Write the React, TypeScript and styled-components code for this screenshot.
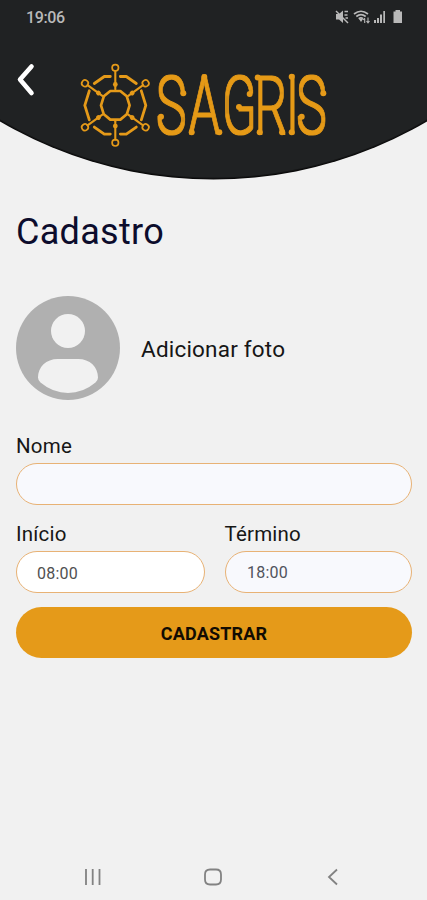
import React from 'react';
import styled, { createGlobalStyle } from 'styled-components';

const GlobalStyle = createGlobalStyle`
  * { box-sizing: border-box; }
  body { margin: 0; background: #f1f1f1; font-family: Roboto, "Liberation Sans", sans-serif; }
`;

const Screen = styled.div`
  width: 427px;
  height: 900px;
  display: flex;
  flex-direction: column;
  background: #f1f1f1;
  overflow: hidden;
`;

const Header = styled.header`
  flex: none;
  height: 180px;
  background: radial-gradient(circle at 50% -243px, #202223 420px, #080808 422px);
  clip-path: circle(422.5px at 50% -243px);
`;

const StatusBar = styled.div`
  height: 34px;
  padding: 0 22px 0 26px;
  display: flex;
  align-items: center;
  justify-content: space-between;
  color: #b9b9b9;
`;

const Clock = styled.span`
  font-size: 16px;
  font-weight: 500;
  line-height: 34px;
  padding-top: 1px;
  letter-spacing: -0.4px;
`;

const Brand = styled.div`
  display: flex;
  align-items: flex-start;
  padding: 26px 0 0 14px;
`;

const BackButton = styled.button`
  width: 24px;
  height: 40px;
  padding: 0;
  border: 0;
  background: none;
  display: block;
`;

const LogoSvg = styled.svg`
  display: block;
  margin-left: 37px;
  overflow: visible;
`;

const Content = styled.main`
  flex: 1;
  padding: 29px 15px 0 16px;
  display: flex;
  flex-direction: column;
`;

const Title = styled.h1`
  margin: 0;
  height: 46px;
  line-height: 46px;
  font-size: 36px;
  font-weight: 400;
  letter-spacing: 0.3px;
  color: #0c0c2c;
`;

const PhotoRow = styled.div`
  display: flex;
  align-items: center;
  gap: 21px;
  margin-top: 41px;
  height: 104px;
`;

const PhotoLabel = styled.span`
  font-size: 22.5px;
  line-height: 28px;
  letter-spacing: 0.2px;
  color: #161616;
  padding-top: 2px;
`;

const Fields = styled.div`
  display: grid;
  grid-template-columns: 188.5px 187.5px;
  column-gap: 20px;
  row-gap: 16px;
  margin-top: 33px;
`;

const Field = styled.label<{ $wide?: boolean }>`
  display: flex;
  flex-direction: column;
  grid-column: ${(p) => (p.$wide ? '1 / -1' : 'auto')};
`;

const FieldLabel = styled.span`
  height: 30px;
  line-height: 26px;
  font-size: 20.5px;
  letter-spacing: 0.2px;
  color: #161616;
`;

const Input = styled.input<{ $white?: boolean }>`
  width: 100%;
  height: 42px;
  padding: ${(p) => (p.$white ? '2px 20px 0' : '0 21.5px')};
  border: 1px solid #e8b275;
  border-radius: 21px;
  background: ${(p) => (p.$white ? '#ffffff' : '#f8f9fd')};
  color: ${(p) => (p.$white ? '#505050' : '#50535c')};
  font: 400 16px Roboto, "Liberation Sans", sans-serif;
  letter-spacing: 0.2px;
  outline: none;
`;

const Submit = styled.button`
  margin-top: 14px;
  height: 51px;
  border: 0;
  border-radius: 26px;
  background: #e59a19;
  color: #120c02;
  font: 700 18px Roboto, "Liberation Sans", sans-serif;
  letter-spacing: 0.2px;
  padding: 2px 0 0;
`;

const NavBar = styled.nav`
  flex: none;
  height: 47px;
  display: flex;
  justify-content: space-between;
  align-items: center;
  padding: 0 83px 0 82px;
`;

const spokes = [0, 54, 126, 180, 234, 306];
const quadrants = ['1 1', '-1 1', '1 -1', '-1 -1'];

const Wheel = () => (
  <g transform="translate(40.3 45.3)" stroke="#e59a19" fill="none" strokeLinecap="round" strokeLinejoin="round">
    <polygon
      points="-5,-14.3 5,-14.3 11.5,-9 14.3,0 11.5,9 5,14.3 -5,14.3 -11.5,9 -14.3,0 -11.5,-9"
      strokeWidth="2.7"
    />
    {spokes.map((a) => (
      <g key={a} transform={`rotate(${a})`}>
        <path d="M0 -16V-34.3" strokeWidth="2.1" />
        <circle cy="-37.5" r="3.2" strokeWidth="1.7" />
        <circle cy="-20.8" r="2.4" fill="#e59a19" stroke="none" />
      </g>
    ))}
    {quadrants.map((q) => (
      <path key={q} transform={`scale(${q})`} d="M5 -28.8H11L21 -21.8" strokeWidth="2.8" />
    ))}
    <path d="M26 -14.5L30.5 0L26 14.5M-26 -14.5L-30.5 0L-26 14.5" strokeWidth="2.8" />
  </g>
);

const tips = [
  [108.3, 33.3], [86, 56.7], [116.7, 72.3], [129.3, 17], [144.3, 72.3], [174.7, 34], [164, 47],
  [182.7, 17.5], [184.7, 72.3], [207, 72.3], [216.7, 16.7], [216.7, 72.3], [248.3, 33.3], [226.7, 56.7],
];

const Logo = () => (
  <LogoSvg width="254" height="84" viewBox="0 0 254 84">
    <filter id="thicken" x="-5%" y="-5%" width="110%" height="110%">
      <feMorphology operator="dilate" radius="1 1" />
    </filter>
    <Wheel />
    <g filter="url(#thicken)">
      <text
        transform="translate(0 73.3) scale(0.62 1)"
        x="131.5 184.5 237.5 290.5 340.5 357.5"
        fill="#e59a19"
        stroke="#e59a19"
        strokeWidth="1"
        strokeLinejoin="round"
        fontFamily="Roboto, sans-serif"
        fontWeight="100"
        fontSize="80"
      >
        SAGRIS
      </text>
    </g>
    {tips.map(([x, y]) => (
      <circle key={`${x}-${y}`} cx={x} cy={y} r="3" fill="#e59a19" />
    ))}
  </LogoSvg>
);

const StatusIcons = () => (
  <svg width="70" height="16" viewBox="0 0 70 16" fill="#b9b9b9">
    <path d="M1 5H4L8 1.5V14L4 10.5H1Z" />
    <path d="M1 2L13 14" stroke="#b9b9b9" strokeWidth="1.4" />
    <path d="M9.5 2.5H13M9.5 6H12.5M10.5 9H13" stroke="#b9b9b9" strokeWidth="1.4" />
    <g fill="none" stroke="#b9b9b9" strokeWidth="1.7">
      <path d="M19 5Q26 -0.5 33 5" />
      <path d="M21.3 7.5Q26 3.8 30.7 7.5" />
      <path d="M23.7 9.7Q26 8 28 9.7" />
      <path d="M29.7 14V9.5M28.2 11L29.7 9.2M33 8.5V13.5M31.5 12L33 13.8L34.5 12" strokeWidth="1.1" />
    </g>
    <path d="M24 10H28L26 13Z" />
    <path d="M39 11H41V14H39ZM42 9H44V14H42ZM45 5.5H47V14H45ZM48.3 2H50V14H48.3Z" />
    <path d="M60.5 1H65V2.5H67V14H58.5V2.5H60.5Z" />
  </svg>
);

const Avatar = () => (
  <svg width="104" height="104" viewBox="0 0 104 104">
    <circle cx="52" cy="52" r="52" fill="#b0b0b0" />
    <circle cx="52" cy="35" r="17" fill="#f1f1f1" />
    <path
      d="M42 63H62C74 63 82 71 82 81.5Q82 84.5 79.5 86.5Q67 97 52 97Q37 97 24.5 86.5Q22 84.5 22 81.5C22 71 30 63 42 63Z"
      fill="#f1f1f1"
    />
  </svg>
);

const NavIcon = ({ d, width }: { d: string; width: number }) => (
  <svg width={width} height="20" viewBox={`0 0 ${width} 20`} fill="none" stroke="#828282" strokeWidth="1.8">
    <path d={d} />
  </svg>
);

export default function App() {
  return (
    <>
      <GlobalStyle />
      <Screen>
        <Header>
          <StatusBar>
            <Clock>19:06</Clock>
            <StatusIcons />
          </StatusBar>
          <Brand>
            <BackButton aria-label="Voltar">
              <svg width="24" height="40" viewBox="0 0 24 40" fill="none">
                <path d="M17.5 6.5L6 19.5L17.5 33" stroke="#fff" strokeWidth="4.6" strokeLinecap="round" strokeLinejoin="round" />
              </svg>
            </BackButton>
            <Logo />
          </Brand>
        </Header>
        <Content>
          <Title>Cadastro</Title>
          <PhotoRow>
            <Avatar />
            <PhotoLabel>Adicionar foto</PhotoLabel>
          </PhotoRow>
          <Fields>
            <Field $wide>
              <FieldLabel>Nome</FieldLabel>
              <Input />
            </Field>
            <Field>
              <FieldLabel>Início</FieldLabel>
              <Input $white defaultValue="08:00" />
            </Field>
            <Field>
              <FieldLabel>Término</FieldLabel>
              <Input defaultValue="18:00" />
            </Field>
          </Fields>
          <Submit>CADASTRAR</Submit>
        </Content>
        <NavBar>
          <NavIcon width={22} d="M4 2V18M10.7 2V18M17.5 2V18" />
          <NavIcon width={22} d="M8 2.5H14Q19 2.5 19 7.5V12.5Q19 17.5 14 17.5H8Q3 17.5 3 12.5V7.5Q3 2.5 8 2.5Z" />
          <NavIcon width={22} d="M15 2.5L7 10L15 17.5" />
        </NavBar>
      </Screen>
    </>
  );
}
